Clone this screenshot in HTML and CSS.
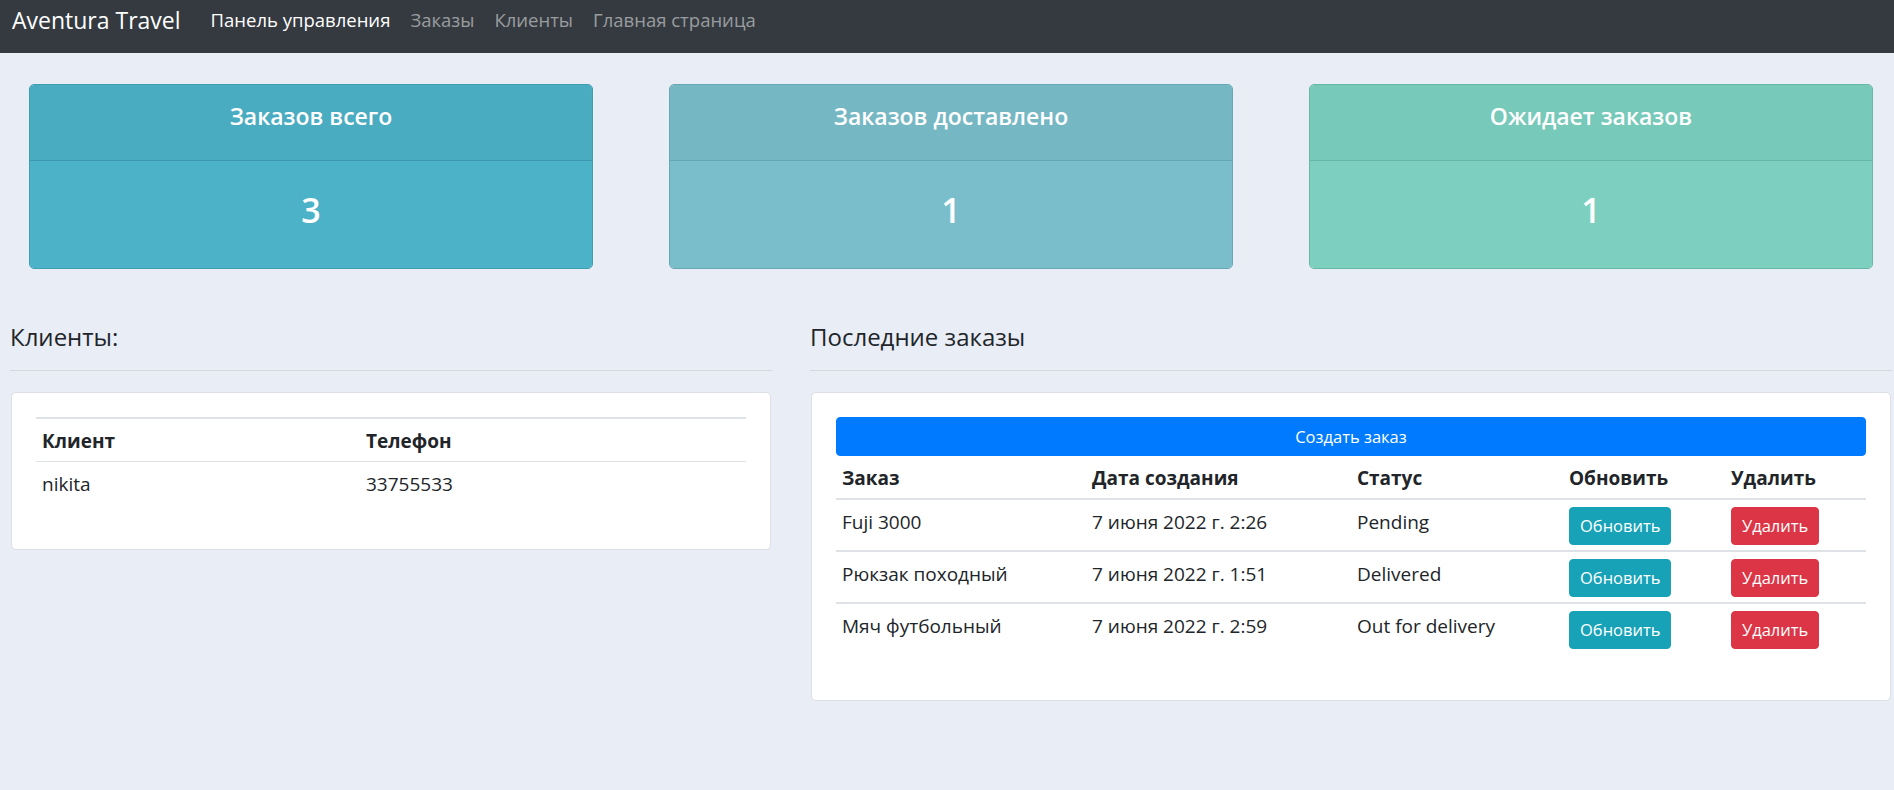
FILE: index.html
```html
<!DOCTYPE html>
<html lang="ru">
<head>
<meta charset="utf-8">
<title>Aventura Travel</title>
<link rel="stylesheet" href="styles.css">
</head>
<body>
<nav class="navbar">
  <a class="brand" href="#">Aventura Travel</a>
  <ul class="nav">
    <li><a class="nav-link active" href="#">Панель управления</a></li>
    <li><a class="nav-link" href="#">Заказы</a></li>
    <li><a class="nav-link" href="#">Клиенты</a></li>
    <li><a class="nav-link" href="#">Главная страница</a></li>
  </ul>
</nav>

<section class="stats">
  <div class="stat stat-total">
    <div class="stat-head">Заказов всего</div>
    <div class="stat-body">3</div>
  </div>
  <div class="stat stat-delivered">
    <div class="stat-head">Заказов доставлено</div>
    <div class="stat-body">1</div>
  </div>
  <div class="stat stat-pending">
    <div class="stat-head">Ожидает заказов</div>
    <div class="stat-body">1</div>
  </div>
</section>

<section class="lower">
  <div class="col col-left">
    <h5 class="section-title">Клиенты:</h5>
    <hr class="divider">
    <div class="panel">
      <table class="table table-clients">
        <colgroup><col class="c-client"><col></colgroup>
        <thead>
          <tr><th>Клиент</th><th>Телефон</th></tr>
        </thead>
        <tbody>
          <tr><td>nikita</td><td>33755533</td></tr>
        </tbody>
      </table>
    </div>
  </div>
  <div class="col col-right">
    <h5 class="section-title">Последние заказы</h5>
    <hr class="divider">
    <div class="panel">
      <a class="btn btn-primary btn-block" href="#">Создать заказ</a>
      <table class="table table-orders">
        <colgroup>
          <col class="c-order"><col class="c-date"><col class="c-status"><col class="c-update"><col>
        </colgroup>
        <thead>
          <tr><th>Заказ</th><th>Дата создания</th><th>Статус</th><th>Обновить</th><th>Удалить</th></tr>
        </thead>
        <tbody>
          <tr>
            <td>Fuji 3000</td><td>7 июня 2022 г. 2:26</td><td>Pending</td>
            <td><a class="btn btn-info" href="#">Обновить</a></td>
            <td><a class="btn btn-danger" href="#">Удалить</a></td>
          </tr>
          <tr>
            <td>Рюкзак походный</td><td>7 июня 2022 г. 1:51</td><td>Delivered</td>
            <td><a class="btn btn-info" href="#">Обновить</a></td>
            <td><a class="btn btn-danger" href="#">Удалить</a></td>
          </tr>
          <tr>
            <td>Мяч футбольный</td><td>7 июня 2022 г. 2:59</td><td>Out for delivery</td>
            <td><a class="btn btn-info" href="#">Обновить</a></td>
            <td><a class="btn btn-danger" href="#">Удалить</a></td>
          </tr>
        </tbody>
      </table>
    </div>
  </div>
</section>
</body>
</html>
```

FILE: styles.css
```css
* { box-sizing: border-box; }

html, body {
  margin: 0;
  padding: 0;
}

body {
  background: #e9edf5;
  color: #212529;
  font-family: "Open Sans", "Noto Sans", sans-serif;
  font-size: 19px;
  line-height: 30px;
}

a { text-decoration: none; }

/* Navbar */
.navbar {
  display: flex;
  align-items: flex-start;
  height: 53px;
  padding: 0 12px;
  background: #343a40;
}

.brand {
  color: #fff;
  font-size: 23px;
  line-height: 40px;
  margin-right: 20px;
}

.nav {
  display: flex;
  list-style: none;
  margin: 0;
  padding: 0;
}

.nav-link {
  display: block;
  padding: 0 10px;
  font-size: 18.5px;
  line-height: 40px;
  color: rgba(255, 255, 255, 0.5);
}

.nav-link.active { color: #fff; }

/* Stat cards */
.stats {
  display: flex;
  gap: 76px;
  padding: 31px 0 0 29px;
}

.stat {
  width: 564px;
  border-radius: 5px;
  border: 1px solid;
  overflow: hidden;
  color: #fff;
  text-align: center;
}

.stat-head {
  height: 76px;
  padding-top: 16px;
  font-size: 23px;
  line-height: 30px;
  font-weight: 600;
  border-bottom: 1px solid;
}

.stat-body {
  height: 107px;
  padding-top: 28px;
  font-size: 34px;
  line-height: 42px;
  font-weight: 600;
}

.stat-total { border-color: #3e9db1; }
.stat-total .stat-head { background: #49acc0; border-color: #3c98ab; }
.stat-total .stat-body { background: #4bb2c7; }

.stat-delivered { border-color: #68a8b5; }
.stat-delivered .stat-head { background: #76b7c4; border-color: #66a6b3; }
.stat-delivered .stat-body { background: #7bbecb; }

.stat-pending { border-color: #65b7a7; }
.stat-pending .stat-head { background: #77c9b9; border-color: #66b5a6; }
.stat-pending .stat-body { background: #7dd0c0; }

/* Lower section */
.lower {
  display: flex;
  gap: 38px;
  padding: 0 0 0 10px;
  margin-top: 53px;
}

.col-left { width: 762px; }
.col-right { width: 1082px; }

.section-title {
  margin: 0;
  font-size: 24px;
  line-height: 30px;
  font-weight: 400;
  color: #212529;
}

.divider {
  border: 0;
  border-top: 1px solid #d5d8de;
  margin: 18px 0 21px;
}

.panel {
  background: #fff;
  border: 1px solid #dcdfe5;
  border-radius: 5px;
  padding: 24px;
  margin: 0 1px;
}

/* Tables */
.table {
  width: 100%;
  border-collapse: collapse;
  table-layout: fixed;
}

.table th,
.table td {
  text-align: left;
  vertical-align: top;
  padding: 7px 6px 5px;
  line-height: 30px;
}

.table th { font-weight: 700; }

.table-clients { margin-bottom: 21px; }

.c-client { width: 324px; }

.table-clients thead th {
  border-top: 2px solid #dee2e6;
  border-bottom: 1px solid #dee2e6;
}

.table-orders { margin-bottom: 22px; }

.c-order { width: 250px; }
.c-date { width: 265px; }
.c-status { width: 212px; }
.c-update { width: 162px; }

.table-orders thead th { border-bottom: 2px solid #dee2e6; }
.table-orders tbody tr + tr td { border-top: 2px solid #dee2e6; }

/* Buttons */
.btn {
  display: inline-block;
  color: #fff;
  font-size: 16.5px;
  line-height: 26px;
  padding: 5px 10px;
  border: 1px solid transparent;
  border-radius: 4px;
  text-align: center;
}

.btn-block {
  display: block;
  width: 100%;
  height: 39px;
  padding-top: 6px;
}

.btn-primary { background: #007bff; border-color: #007bff; }
.btn-info { background: #17a2b8; border-color: #17a2b8; }
.btn-danger { background: #dc3545; border-color: #dc3545; }
```
